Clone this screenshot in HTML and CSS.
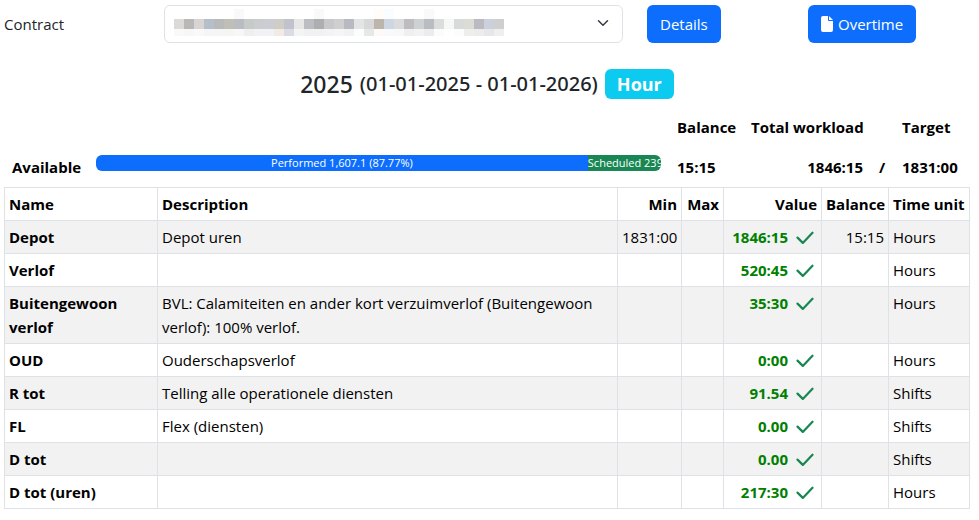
FILE: index.html
```html
<!DOCTYPE html>
<html lang="en">
<head>
<meta charset="utf-8">
<meta name="viewport" content="width=device-width, initial-scale=1">
<title>Contract hours</title>
<link rel="stylesheet" href="styles.css">
</head>
<body>
<svg class="defs" aria-hidden="true">
  <symbol id="check" viewBox="0 0 18 14"><path d="M1.5 6.6 6.8 11.9 16.5 1.7" fill="none" stroke="#198754" stroke-width="2.2" stroke-linecap="round" stroke-linejoin="round"/></symbol>
</svg>
<main class="page">
  <form class="toolbar">
    <label for="contract">Contract</label>
    <div class="picker">
      <svg class="mosaic" viewBox="0 0 340 27" aria-hidden="true" shape-rendering="crispEdges">
        <path d="M60 0h10v10H60zM140 0h10v10h-10zM250 0h10v10h-10z" fill="#f9f9f9"/>
        <path d="M200 0h10v10h-10z" fill="#fffcfa"/><path d="M210 0h10v10h-10z" fill="#fafdff"/>
        <g id="cells"></g>
      </svg>
      <select id="contract"><option></option></select>
      <svg class="chevron" viewBox="0 0 16 16" aria-hidden="true"><path d="m2 5 6 6 6-6" fill="none" stroke="#343a40" stroke-width="2" stroke-linecap="round" stroke-linejoin="round"/></svg>
    </div>
    <div><button type="button" class="btn">Details</button></div>
    <div><button type="button" class="btn"><svg class="file" viewBox="0 0 12 16" aria-hidden="true"><path d="M2 0h5v4a1 1 0 0 0 1 1h4v9a2 2 0 0 1-2 2H2a2 2 0 0 1-2-2V2a2 2 0 0 1 2-2zM8 0l4 4H8z" fill="#fff"/></svg>Overtime</button></div>
  </form>

  <h1 class="title">2025 <small>(01-01-2025 - 01-01-2026)</small> <span class="badge">Hour</span></h1>

  <table class="summary">
    <colgroup><col class="s-name"><col><col class="s-balance"><col class="s-total"><col class="s-slash"><col class="s-target"></colgroup>
    <thead>
      <tr><th></th><th></th><th>Balance</th><th class="num">Total workload</th><th></th><th>Target</th></tr>
    </thead>
    <tbody>
      <tr>
        <th scope="row">Available</th>
        <td>
          <div class="progress">
            <div class="bar" style="width:87.77%">Performed 1,607.1 (87.77%)</div>
            <div class="bar scheduled" style="width:13.06%">Scheduled 239</div>
          </div>
        </td>
        <td>15:15</td><td class="num">1846:15</td><td>/</td><td>1831:00</td>
      </tr>
    </tbody>
  </table>

  <table class="counters">
    <colgroup><col class="c-name"><col><col class="c-min"><col class="c-max"><col class="c-value"><col class="c-balance"><col class="c-unit"></colgroup>
    <thead>
      <tr><th>Name</th><th>Description</th><th class="num">Min</th><th class="num">Max</th><th class="num">Value</th><th class="num">Balance</th><th>Time unit</th></tr>
    </thead>
    <tbody>
      <tr><th scope="row">Depot</th><td>Depot uren</td><td class="num">1831:00</td><td></td><td class="value">1846:15<svg class="check"><use href="#check"/></svg></td><td class="num">15:15</td><td>Hours</td></tr>
      <tr><th scope="row">Verlof</th><td></td><td></td><td></td><td class="value">520:45<svg class="check"><use href="#check"/></svg></td><td></td><td>Hours</td></tr>
      <tr><th scope="row">Buitengewoon verlof</th><td>BVL: Calamiteiten en ander kort verzuimverlof (Buitengewoon verlof): 100% verlof.</td><td></td><td></td><td class="value">35:30<svg class="check"><use href="#check"/></svg></td><td></td><td>Hours</td></tr>
      <tr><th scope="row">OUD</th><td>Ouderschapsverlof</td><td></td><td></td><td class="value">0:00<svg class="check"><use href="#check"/></svg></td><td></td><td>Hours</td></tr>
      <tr><th scope="row">R tot</th><td>Telling alle operationele diensten</td><td></td><td></td><td class="value">91.54<svg class="check"><use href="#check"/></svg></td><td></td><td>Shifts</td></tr>
      <tr><th scope="row">FL</th><td>Flex (diensten)</td><td></td><td></td><td class="value">0.00<svg class="check"><use href="#check"/></svg></td><td></td><td>Shifts</td></tr>
      <tr><th scope="row">D tot</th><td></td><td></td><td></td><td class="value">0.00<svg class="check"><use href="#check"/></svg></td><td></td><td>Shifts</td></tr>
      <tr><th scope="row">D tot (uren)</th><td></td><td></td><td></td><td class="value">217:30<svg class="check"><use href="#check"/></svg></td><td></td><td>Hours</td></tr>
    </tbody>
  </table>
</main>
<script src="mosaic.js"></script>
</body>
</html>
```
FILE: mosaic.js
```js
// Fills the redacted contract name with two rows of coloured cells.
const rows = [
  { y: 10, h: 10, colors: "dcdad9 b8b8b8 d9d4d4 b4bfc9 b8b9ba bfbfb7 b9bcc0 c6cac9 cacccf cccdd2 d0cdc6 c0c3cb e6e7e6 bcbdc2 adaeae c8c8ca cfcfd0 b9b9c1 e2e5e4 d8d8d8 bcb5ad cdd6e1 dbdbdc bfbcc0 cdd1d2 b9bdc2 dbdddd f5f8f7 d9d9da dcdcd7 bdb9c0 cbd0dc cfcfcf" },
  { y: 20, h: 7, colors: "f9f9fa f7f7f7 faf8f8 f3f5f6 f5f5f6 f5f5f3 f7f7f8 f0eeee f2f2f4 f1f2f5 f2eae4 d9dde3 f4f4f4 f1f1f3 f1f1f2 f3f3f5 f5f5f5 f1f2f4 fbfdfc e6e8e7 fcf9f7 f8f9fb f8f8f8 f0eff0 f1f2f3 ececee fafbfb ffffff fbfdfc eeeeed ececed e7e7e9 efefef" }
];
const cells = document.getElementById("cells");
for (const row of rows) {
  row.colors.split(" ").forEach((color, i) => {
    const rect = document.createElementNS("http://www.w3.org/2000/svg", "rect");
    rect.setAttribute("x", i * 10);
    rect.setAttribute("y", row.y);
    rect.setAttribute("width", 10);
    rect.setAttribute("height", row.h);
    rect.setAttribute("fill", "#" + color);
    cells.append(rect);
  });
}
```
FILE: styles.css
```css
* { box-sizing: border-box; }

body {
  margin: 0;
  background: #fff;
  color: #212529;
  font: 15px/24px "Segoe UI", "Open Sans", "Noto Sans", sans-serif;
}

.defs { display: none; }

.page { padding: 5px 9px 8px 4px; }

.toolbar {
  display: grid;
  grid-template-columns: 160px 1fr 161px 186px;
  align-items: center;
}
.toolbar > div + div { padding-left: 24px; }

.picker { position: relative; }
.picker select {
  display: block;
  width: 100%;
  height: 38px;
  padding: 6px 36px 6px 12px;
  border: 1px solid #dee2e6;
  border-radius: 6px;
  background: transparent;
  appearance: none;
  font: inherit;
  color: inherit;
}
.mosaic { position: absolute; left: 10px; top: 4px; width: 340px; height: 27px; }
.chevron { position: absolute; right: 14px; top: 12px; width: 12px; height: 12px; }
.chevron { pointer-events: none; }

.btn {
  display: inline-flex;
  align-items: center;
  gap: 5px;
  height: 38px;
  padding: 0 13px;
  border: 0;
  border-radius: 6px;
  background: #0d6efd;
  color: #fff;
  font: inherit;
  white-space: nowrap;
}
.file { width: 12px; height: 16px; }

.title {
  display: flex;
  justify-content: center;
  align-items: center;
  gap: 7px;
  margin: 24px 0 6px;
  font-family: "Segoe UI", "Noto Sans", "Open Sans", sans-serif;
  font-size: 23px;
  line-height: 34px;
  font-weight: 500;
}
.title small { font-size: 20px; }
.badge {
  padding: 0 12px;
  border-radius: 6px;
  background: #0dcaf0;
  color: #fff;
  font-family: "Segoe UI", "Open Sans", sans-serif;
  font-size: 18px;
  line-height: 30px;
  font-weight: 700;
}

table {
  width: 100%;
  border-collapse: collapse;
  table-layout: fixed;
  color: #000;
}
th { text-align: left; font-weight: 700; }
td, th { vertical-align: top; }
.num { text-align: right; }

.summary th, .summary td { padding: 8px; font-weight: 700; white-space: nowrap; }
.s-name { width: 84px; }
.s-balance { width: 74px; }
.s-total { width: 128px; }
.s-slash { width: 23px; }
.s-target { width: 76px; }

.progress {
  display: flex;
  height: 16px;
  overflow: hidden;
  border-radius: 6px;
  background: #e9ecef;
}
.bar {
  overflow: hidden;
  background: #0d6efd;
  color: #fff;
  font-size: 11px;
  line-height: 16px;
  font-weight: 400;
  text-align: center;
}
.scheduled { background: #198754; }

.counters th, .counters td { padding: 4px; border: 1px solid #dee2e6; }
.counters tbody tr:nth-child(odd) { background: #f2f2f2; }
.c-name { width: 153px; }
.c-min { width: 64px; }
.c-max { width: 42px; }
.c-value { width: 98px; }
.c-balance { width: 67px; }
.c-unit { width: 81px; }
.value { color: green; font-weight: 700; text-align: right; white-space: nowrap; }
.check { width: 18px; height: 14px; margin: 0 3px 0 8px; vertical-align: -2px; }
```
